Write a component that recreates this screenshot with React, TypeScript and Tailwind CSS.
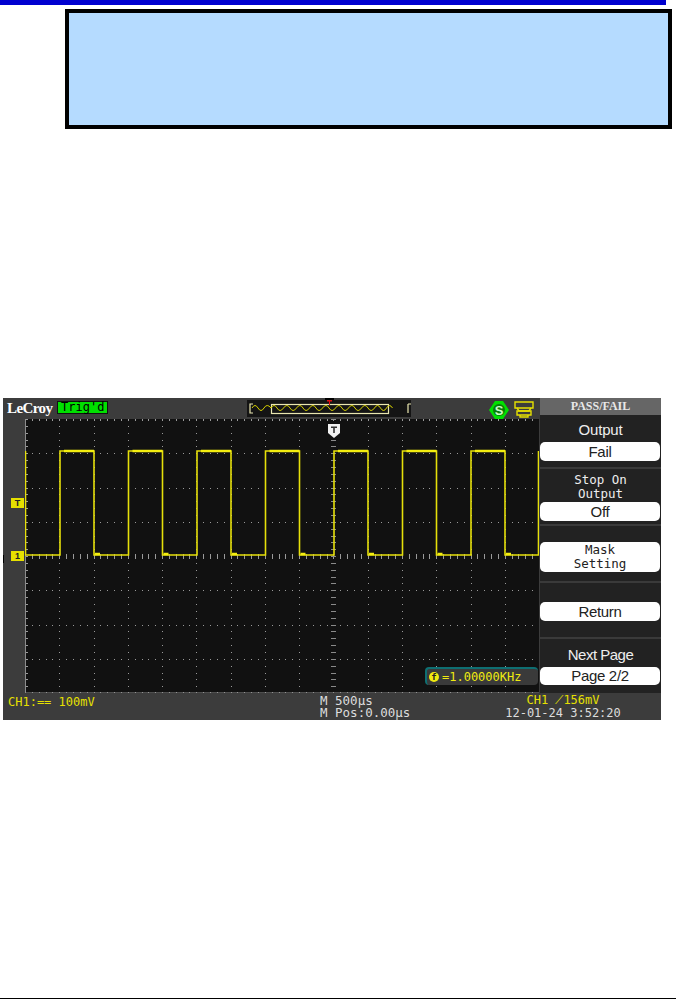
import React from "react";

const DIV = 34.27;
const GRID_W = 514;
const GRID_H = 274;
const RISES = [35, 103.5, 172, 240.5, 309, 377.5, 446];
const FALLS = [69, 137.5, 206, 274.5, 343, 411.5, 480];
const HIGH = 32;
const LOW = 136;

function wavePath() {
  let d = `M0.5 ${HIGH} L0.5 ${LOW}`;
  RISES.forEach((r, i) => {
    d += ` L${r} ${LOW} L${r} ${HIGH} L${FALLS[i]} ${HIGH} L${FALLS[i]} ${LOW}`;
  });
  d += ` L513.5 ${LOW} L513.5 ${HIGH}`;
  return d;
}

function GridDots() {
  const dots: React.ReactElement[] = [];
  const step = DIV / 5;
  for (let row = 0; row <= 8; row++) {
    const y = Math.round(row * DIV);
    for (let i = 0; i <= 75; i++) {
      const x = Math.round(i * step);
      const tall = row === 4 || row === 0 || row === 8;
      dots.push(<rect key={`h${row}-${i}`} x={x} y={row === 4 ? y - 2 : y - (tall ? 1 : 0)} width={1} height={row === 4 ? 5 : tall ? 3 : 1} fill="#9a9a9a" />);
    }
  }
  for (let col = 0; col <= 15; col++) {
    const x = Math.round(col * DIV);
    for (let i = 0; i <= 40; i++) {
      const y = Math.round(i * step);
      if (col === 9) {
        dots.push(<rect key={`v${col}-${i}`} x={x - 2} y={y} width={5} height={1} fill="#8a8a8a" />);
      } else if (col === 0) {
        dots.push(<rect key={`v${col}-${i}`} x={x} y={y} width={3} height={1} fill="#9a9a9a" />);
      } else {
        dots.push(<rect key={`v${col}-${i}`} x={x} y={y} width={1} height={1} fill="#9a9a9a" />);
      }
    }
  }
  return <>{dots}</>;
}

function Scope() {
  return (
    <svg width={GRID_W} height={GRID_H} className="block">
      <rect width={GRID_W} height={GRID_H} fill="#111111" />
      <GridDots />
      <path d="M0.5 0 V274 H514" stroke="#8c8c8c" fill="none" />
      <path d={wavePath()} stroke="#e6e00a" strokeWidth={1.6} fill="none" />
      {RISES.map((r, i) => (
        <path key={i} d={`M${r + 4} ${HIGH} H${FALLS[i]} M${FALLS[i] + 1} ${LOW - 1} H${FALLS[i] + 6}`} stroke="#f4ee10" strokeWidth={2.4} fill="none" />
      ))}
    </svg>
  );
}

function TimeBase() {
  return (
    <div className="relative w-[164px] h-[17px] bg-[#141414] mt-[2px]">
      <svg width={164} height={17} className="block">
        <path d="M6 4 H3 V13 H6" stroke="#e9e6b0" fill="none" strokeWidth={1.2} />
        <path d="M161 4 H164 M161 4 V13" stroke="#e9e6b0" fill="none" strokeWidth={1.2} />
        <rect x={24.5} y={4.5} width={117} height={9} fill="none" stroke="#e9e6b0" strokeWidth={1.2} />
        <path
          d="M5 8 q3 -5 6 0 t6 0 t7 0 q3 -5 6 0 t6.5 0 t6.5 0 t6.5 0 t6.5 0 t6.5 0 t6.5 0 t6.5 0 t6.5 0 t6.5 0 t6.5 0 t6.5 0 t6.5 0 t6.5 0 t6.5 0 t6.5 0 q3 -5 6 0 t6 0 t6 0"
          stroke="#d8d200"
          fill="none"
          strokeWidth={1}
        />
      </svg>
      <svg width={10} height={7} className="absolute left-[78px] -top-[2px]">
        <rect x={0} y={0} width={9} height={2} fill="#000" />
        <path d="M2 2 H7 V3.5 H5 V7 H4 V3.5 H2 Z" fill="#e01010" />
      </svg>
    </div>
  );
}

function Menu({ label, pill, h }: { label?: string[]; pill: string[]; h: string }) {
  return null;
}

function Section({ className, children }: { className: string; children: React.ReactNode }) {
  return <div className={`relative bg-[#222222] border-b-[2px] border-[#3a3a3a] flex flex-col items-center ${className}`}>{children}</div>;
}

function Pill({ children, mono, className = "" }: { children: React.ReactNode; mono?: boolean; className?: string }) {
  return (
    <div
      className={`w-[120px] ml-[0px] self-start bg-white rounded-[5px] text-[#222] text-center flex flex-col items-center justify-center leading-[14px] ${
        mono ? "font-['DejaVu_Sans_Mono',monospace] text-[12.5px]" : "font-['Liberation_Sans',sans-serif] text-[15px] tracking-[-0.3px]"
      } ${className}`}
    >
      {children}
    </div>
  );
}

export default function App() {
  return (
    <div className="w-[676px] h-[1000px] bg-white flex flex-col overflow-hidden">
      <div className="w-[666px] h-[5px] bg-[#0000d0]" />
      <div className="ml-[65px] mt-[4px] w-[607px] h-[120px] border-[4px] border-black bg-[#b5dbff]" />

      <div className="ml-[3px] mt-[269px] w-[658px] h-[322px] bg-[#3c3c3c] flex relative">
        <div className="w-[537px] flex flex-col shrink-0">
          {/* top strip */}
          <div className="h-[21px] flex items-start relative">
            <span className="ml-[4px] mt-[1px] text-white font-bold text-[15px] leading-[18px] tracking-[-0.6px] font-['Liberation_Serif',serif]">LeCroy</span>
            <span className="ml-[5px] mt-[3px] h-[13px] w-[51px] bg-[#00e000] border border-[#111] text-black text-[12px] leading-[11px] text-center font-['DejaVu_Sans_Mono',monospace]">Trig'd</span>
            <div className="ml-[139px]">
              <TimeBase />
            </div>
            <svg width={20} height={18} viewBox="0 0 20 18" className="ml-[78px] mt-[3px] shrink-0">
              <path d="M6 0 H14 L20 9 L14 18 H6 L0 9 Z" fill="#00e000" />
              <circle cx={10} cy={9} r={6} fill="#0a7a0a" />
              <text x={10} y={13.5} textAnchor="middle" fontSize={13} fontWeight="bold" fill="#c8ffc8" fontFamily="Liberation Sans">S</text>
            </svg>
            <svg width={20} height={17} viewBox="0 0 20 17" className="ml-[5px] mt-[3px] shrink-0" fill="none" stroke="#e6e000" strokeWidth={1.4}>
              <path d="M1 1 H19 V7 H1 Z" />
              <path d="M3 7 L5 10 H15 L17 7" />
              <path d="M3 10 H17 V14 H3 Z" />
              <path d="M6 14 V16 H14 V14" />
            </svg>
          </div>
          {/* grid */}
          <div className="ml-[22px] relative">
            <Scope />
            <div className="absolute left-[400px] bottom-[8px] w-[113px] h-[18px] rounded-[4px] bg-[#3a3a3a] border-t-[2px] border-l-[2px] border-[#0e6f72] flex items-center pl-[2px] text-[#f0ea10] font-['DejaVu_Sans_Mono',monospace] text-[12px] leading-none">
              <span className="w-[10px] h-[10px] rounded-full bg-[#f0ea10] text-[#222] text-[9px] leading-[10px] font-bold text-center mr-[3px]">f</span>
              <span>=1.00000KHz</span>
            </div>
            <svg width={14} height={15} viewBox="0 0 14 15" className="absolute left-[302px] top-[4px]">
              <path d="M1 1 H13 V10 L7 15 L1 10 Z" fill="#f2f2f2" />
              <path d="M4 3.5 H10 V5 H7.8 V10 H6.2 V5 H4 Z" fill="#333" />
            </svg>
          </div>
          {/* status */}
          <div className="flex-1 relative font-['DejaVu_Sans_Mono',monospace] text-[12px] leading-[12px]">
            <span className="absolute left-[5px] top-[3px] text-[#e6e000]">CH1:== 100mV</span>
            <div className="absolute left-[317px] top-[2px] text-[#dddddd] text-[12.5px]">
              <div>M 500μs</div>
              <div>M Pos:0.00μs</div>
            </div>
          </div>
          {/* trigger markers */}
          <div className="absolute left-[8px] top-[100px] w-[13px] h-[10px] bg-[#e6e000] text-[#222] text-[9px] leading-[10px] font-bold text-center font-['Liberation_Sans',sans-serif]">T</div>
          <div className="absolute left-[8px] top-[153px] w-[13px] h-[10px] bg-[#e6e000] text-[#222] text-[9px] leading-[10px] font-bold text-center font-['Liberation_Sans',sans-serif]">1</div>
          <div className="absolute left-0 top-[157px] w-[1px] h-[8px] bg-black" />
        </div>

        {/* side menu */}
        <div className="flex-1 flex flex-col">
          <div className="h-[17px] bg-[#666666] text-center text-[#e8e8e8] font-['Liberation_Serif',serif] font-bold text-[12px] leading-[17px]">PASS/FAIL</div>
          <Section className="h-[54px]">
            <span className="mt-[5px] h-[22px] text-[#eeeeee] text-[15px] leading-[20px] tracking-[-0.2px] font-['Liberation_Sans',sans-serif]">Output</span>
            <Pill className="h-[19px]">Fail</Pill>
          </Section>
          <Section className="h-[57px]">
            <span className="mt-[4px] h-[29px] text-[#eeeeee] text-[12.5px] leading-[14px] text-center font-['DejaVu_Sans_Mono',monospace]">
              Stop On
              <br />
              Output
            </span>
            <Pill className="h-[19px]">Off</Pill>
          </Section>
          <Section className="h-[57px]">
            <Pill mono className="h-[30px] mt-[16px]">
              <span>Mask</span>
              <span>Setting</span>
            </Pill>
          </Section>
          <Section className="h-[56px]">
            <Pill className="h-[19px] mt-[19px]">Return</Pill>
          </Section>
          <div className="flex-1 bg-[#222222] flex flex-col items-center">
            <span className="mt-[6px] h-[22px] text-[#eeeeee] text-[15px] leading-[20px] tracking-[-0.5px] font-['Liberation_Sans',sans-serif]">Next Page</span>
            <Pill className="h-[18px]">Page 2/2</Pill>
          </div>
          <div className="h-[27px] text-center font-['DejaVu_Sans_Mono',monospace] text-[12px] leading-[13px]" />
        </div>

        <div className="absolute left-[495px] bottom-0 w-[130px] text-center font-['DejaVu_Sans_Mono',monospace] text-[12px] leading-[13px]">
          <div className="text-[#e6e000]">CH1 ⟋156mV</div>
          <div className="text-[#dddddd]">12-01-24 3:52:20</div>
        </div>
      </div>

      <div className="mt-auto mb-[1px] w-full h-[1px] bg-black" />
    </div>
  );
}
